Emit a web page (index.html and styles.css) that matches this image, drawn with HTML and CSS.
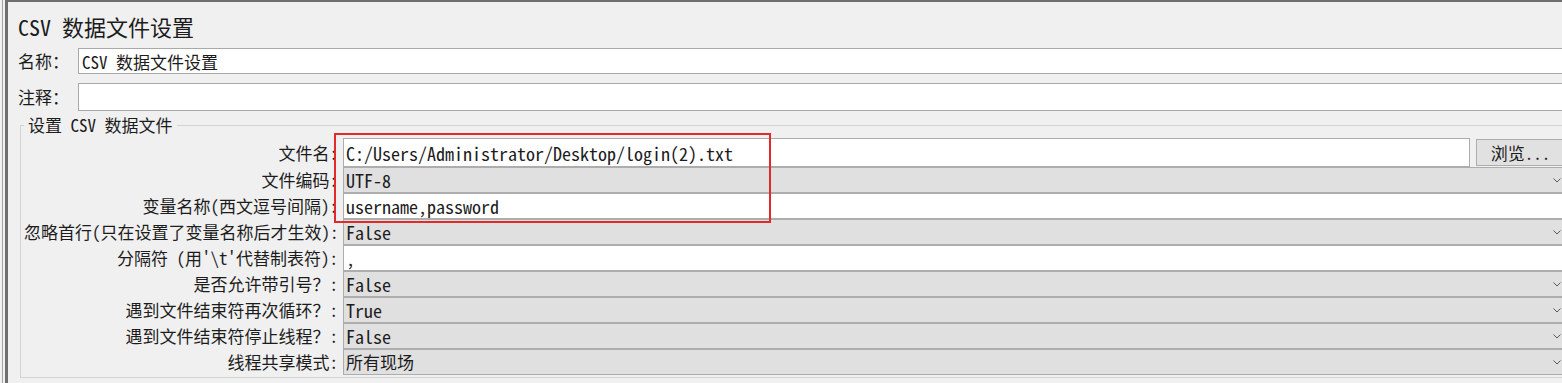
FILE: index.html
```html
<!DOCTYPE html>
<html lang="zh-CN">
<head>
  <meta charset="UTF-8">
  <meta name="viewport" content="width=device-width, initial-scale=1.0">
  <title>CSV 数据文件设置</title>
  <link rel="stylesheet" href="styles.css">
</head>
<body>

<div class="window">
  <div class="panel">
    <h2 class="title">CSV 数据文件设置</h2>

    <div class="line">
      <label class="line-label">名称：</label>
      <input class="line-input" value="CSV 数据文件设置">
    </div>
    <div class="line line-tall">
      <label class="line-label">注释：</label>
      <input class="line-input" value="">
    </div>

    <fieldset class="group">
      <legend class="group-title">设置 CSV 数据文件</legend>

      <div class="row row-first">
        <span class="row-label">文件名:</span>
        <div class="field field-text"><span class="value">C:/Users/Administrator/Desktop/login(2).txt</span></div>
        <button class="browse">浏览...</button>
      </div>
      <div class="row">
        <span class="row-label">文件编码:</span>
        <div class="field field-combo">
          <span class="value">UTF-8</span>
          <svg class="arrow" width="8" height="5" viewBox="0 0 8 5"><polyline points="0.5,0.5 4,4 7.5,0.5"/></svg>
        </div>
      </div>
      <div class="row">
        <span class="row-label">变量名称(西文逗号间隔):</span>
        <div class="field field-text"><span class="value">username,password</span></div>
      </div>
      <div class="row">
        <span class="row-label">忽略首行(只在设置了变量名称后才生效):</span>
        <div class="field field-combo">
          <span class="value">False</span>
          <svg class="arrow" width="8" height="5" viewBox="0 0 8 5"><polyline points="0.5,0.5 4,4 7.5,0.5"/></svg>
        </div>
      </div>
      <div class="row">
        <span class="row-label">分隔符 (用'\t'代替制表符):</span>
        <div class="field field-text"><span class="value">,</span></div>
      </div>
      <div class="row">
        <span class="row-label">是否允许带引号？:</span>
        <div class="field field-combo">
          <span class="value">False</span>
          <svg class="arrow" width="8" height="5" viewBox="0 0 8 5"><polyline points="0.5,0.5 4,4 7.5,0.5"/></svg>
        </div>
      </div>
      <div class="row">
        <span class="row-label">遇到文件结束符再次循环？:</span>
        <div class="field field-combo">
          <span class="value">True</span>
          <svg class="arrow" width="8" height="5" viewBox="0 0 8 5"><polyline points="0.5,0.5 4,4 7.5,0.5"/></svg>
        </div>
      </div>
      <div class="row">
        <span class="row-label">遇到文件结束符停止线程？:</span>
        <div class="field field-combo">
          <span class="value">False</span>
          <svg class="arrow" width="8" height="5" viewBox="0 0 8 5"><polyline points="0.5,0.5 4,4 7.5,0.5"/></svg>
        </div>
      </div>
      <div class="row">
        <span class="row-label">线程共享模式:</span>
        <div class="field field-combo">
          <span class="value value-cjk">所有现场</span>
          <svg class="arrow" width="8" height="5" viewBox="0 0 8 5"><polyline points="0.5,0.5 4,4 7.5,0.5"/></svg>
        </div>
      </div>
    </fieldset>
  </div>
</div>

<div class="mark"></div>

</body>
</html>
```

FILE: styles.css
```css
html, body {
  margin: 0;
  overflow: hidden;
}
body {
  height: 383px;
  background-color: #f0f0f0;
  color: #1c1c1c;
  font-family: "Noto Sans Mono CJK SC", "Liberation Mono", "Noto Sans CJK SC", monospace;
  font-size: 17px;
}
.window {
  height: 383px;
  margin-left: 2px;
  padding-left: 2px;
  border-left: 1px solid #a3a3a3;
}
.panel {
  width: 1550px;
  height: 100%;
  padding: 10px 0 0 10px;
  border-left: 3px solid #6e6e6e;
  border-top: 2px solid #6e6e6e;
}
.title {
  margin: 0 0 8px;
  font-size: 22px;
  font-weight: normal;
  line-height: 28px;
}
.line {
  display: flex;
  align-items: center;
  height: 26px;
}
.line-tall {
  height: 28px;
  margin-top: 9px;
}
.line-label {
  width: 60px;
  line-height: 20px;
}
.line-input {
  flex: 1;
  width: 0;
  height: 100%;
  box-sizing: border-box;
  margin: 0;
  padding: 0 3px;
  border: 1px solid #a9a9a9;
  background: #fff;
  font: inherit;
  color: inherit;
  outline: none;
}
.group {
  margin: 4px 0 0 2px;
  padding: 3px 2px 2px 3px;
  border: 1px solid #d3d3d3;
  min-width: 0;
}
.group-title {
  padding: 0 4px;
  line-height: 20px;
}
.row {
  display: flex;
  height: 26px;
}
.row-first {
  height: 29px;
  align-items: center;
}
.row-label {
  width: 314px;
  margin-right: 5px;
  align-self: center;
  line-height: 20px;
  text-align: right;
  white-space: nowrap;
}
.field {
  flex: 1;
  height: 100%;
  box-sizing: border-box;
  display: flex;
  align-items: center;
  padding: 0 3px 0 2px;
  border: 1px solid #adadad;
}
.field-text {
  background: #fff;
}
.field-combo {
  background: #e0e0e0;
  justify-content: space-between;
}
.value {
  font-size: 18px;
  line-height: 22px;
  white-space: pre;
}
.value-cjk {
  font-size: 17px;
}
.arrow polyline {
  fill: none;
  stroke: #5a5a5a;
}
.browse {
  width: 89px;
  height: 27px;
  margin: 0 0 0 6px;
  padding: 0;
  border: 1px solid #adadad;
  background: #e1e1e1;
  font: inherit;
  color: inherit;
}
.mark {
  position: absolute;
  left: 334px;
  top: 133px;
  width: 437px;
  height: 90px;
  box-sizing: border-box;
  border: 2px solid #e22a2a;
}
```
